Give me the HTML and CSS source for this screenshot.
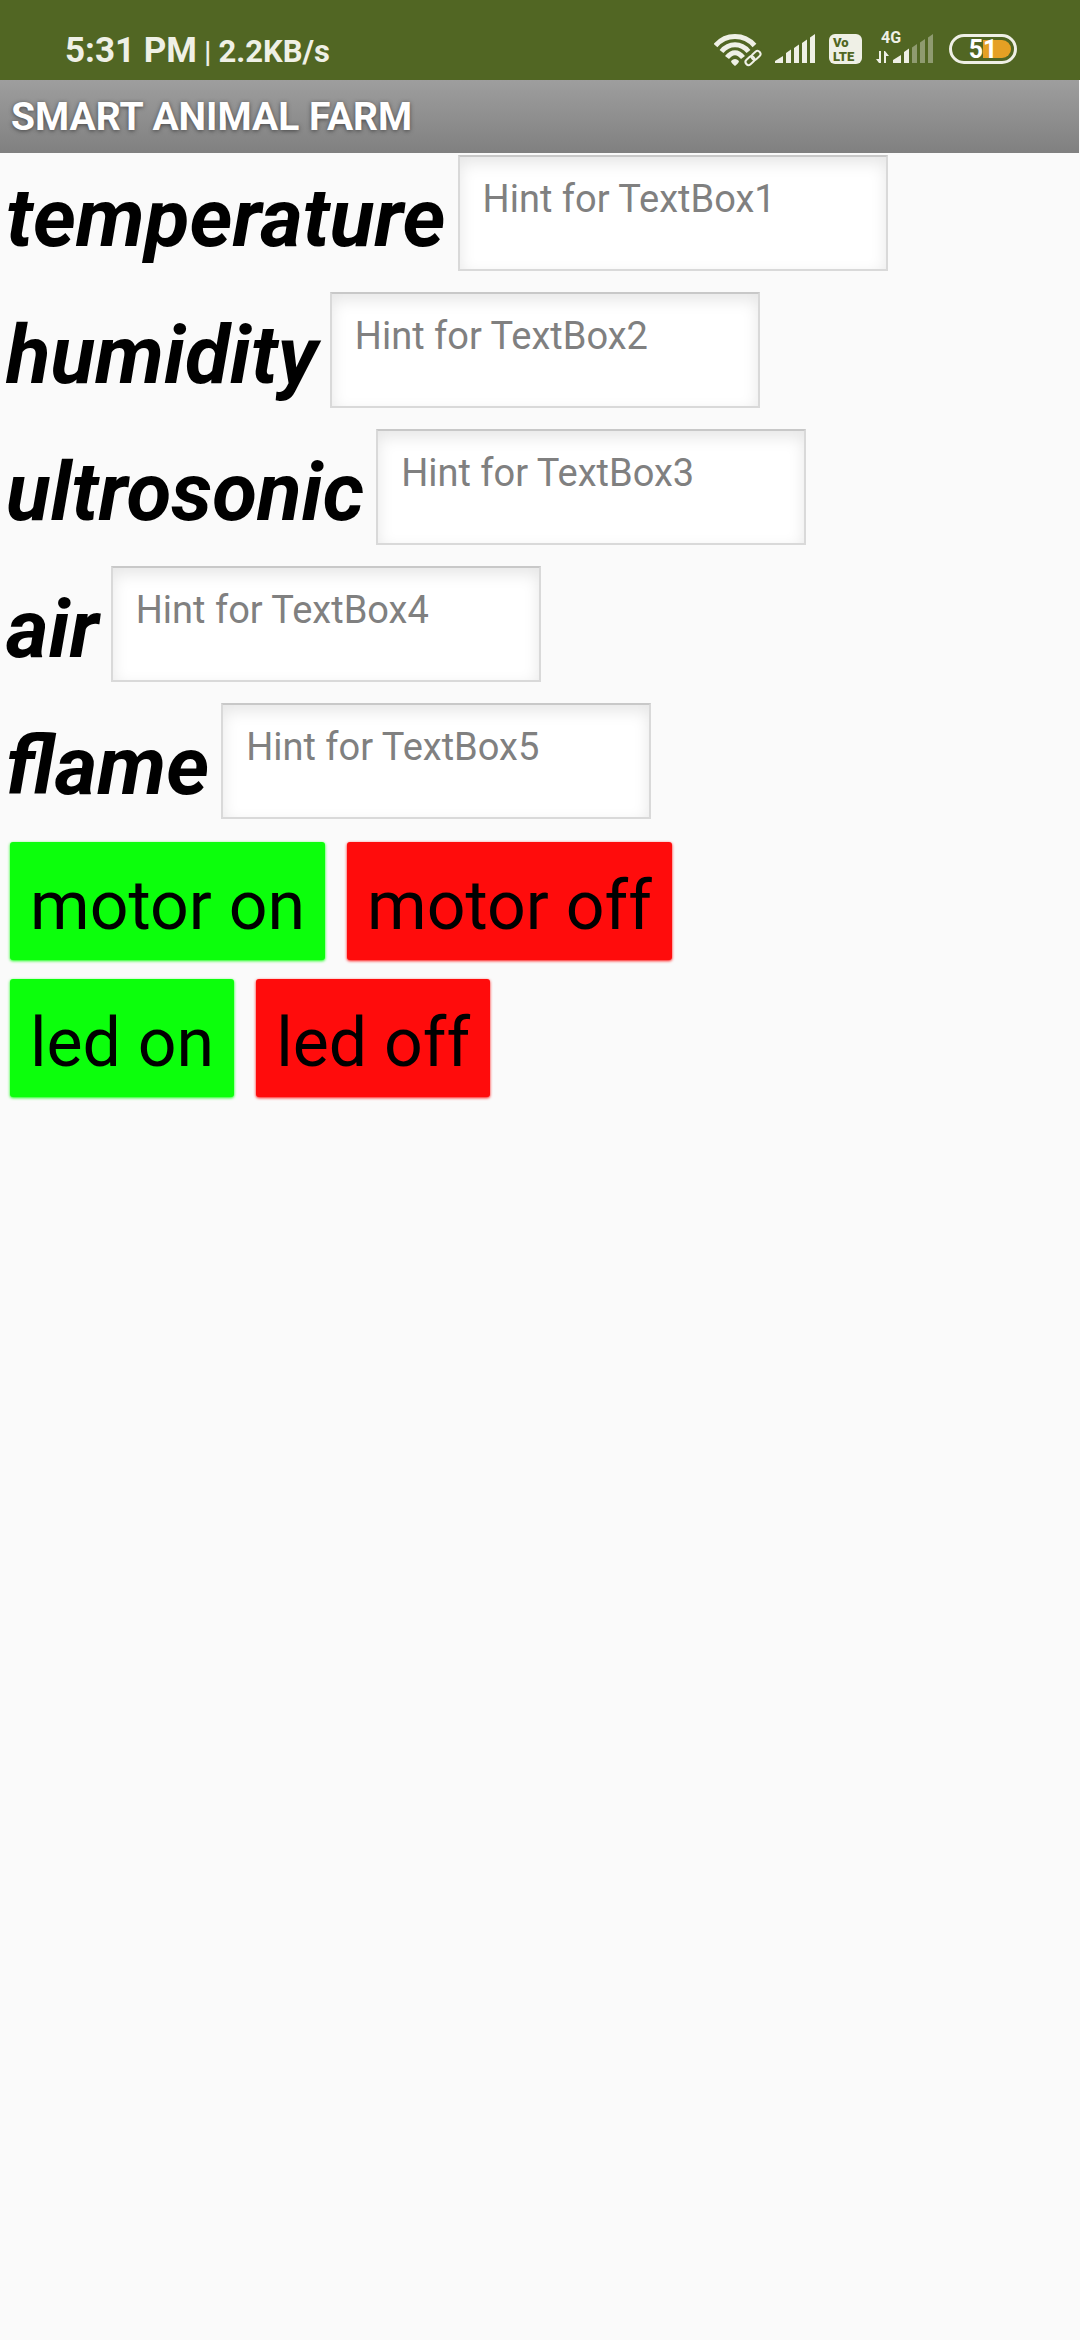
FILE: index.html
```html
<!DOCTYPE html>
<html lang="en">
<head>
<meta charset="utf-8">
<meta name="viewport" content="width=device-width, initial-scale=1">
<title>SMART ANIMAL FARM</title>
<link rel="stylesheet" href="styles.css">
</head>
<body>
<header class="status">
  <div class="status-left">
    <span class="clock">5:31 PM</span><span class="divider">|</span><span class="speed">2.2KB/s</span>
  </div>
  <div class="status-right">
    <svg class="wifi" width="48" height="34" viewBox="0 0 48 34" aria-label="Wi-Fi">
      <g fill="none" stroke="#eff0e6" stroke-width="5">
        <path d="M1.500 11.500C12-.5 30-.5 40.500 11.500"/>
        <path d="M7.500 17.500C15 8.500 27 8.500 34.500 17.500"/>
        <path d="M13 23.500C18 17 24 17 29 23.500"/>
      </g>
      <path d="M17 27q4-4 8 0c0 2-2 3-4 5c-2-2-4-3-4-5z" fill="#eff0e6"/>
      <g fill="none" transform="rotate(-42 39 24)">
        <g stroke="#516623" stroke-width="6"><rect x="30" y="21" width="10" height="6" rx="3"/><rect x="38" y="21" width="10" height="6" rx="3"/></g>
        <g stroke="#eff0e6" stroke-width="2"><rect x="30" y="21" width="10" height="6" rx="3"/><rect x="38" y="21" width="10" height="6" rx="3"/></g>
      </g>
    </svg>
    <svg class="signal" width="41" height="30" viewBox="0 0 41 30" aria-label="Signal">
      <path fill="#eff0e6" d="M0 29v-2l8-5v7zM11 29V19l5-3.500V29zM19 29V14l5-3.500V29zM27 29V9l5-3.500V29zM35 29V3.500L40 0V29z"/>
    </svg>
    <span class="volte"><span>Vo</span><span>LTE</span></span>
    <div class="mobile">
      <span class="net">4G</span>
      <svg width="57" height="30" viewBox="0 0 57 30" aria-label="Mobile data">
        <path fill="#eff0e6" d="M3 17h2v12H3l-3-4h3zM8 17h1l4 5h-3v7H8zM17 29v-3l8-5v8zM28 29V18l5-3.500V29z"/>
        <path fill="#8f9b70" d="M36 29V13.500l5-3.500V29zM44 29V8.500L49 5V29zM52 29V3.500L57 0V29z"/>
      </svg>
    </div>
    <span class="battery">51</span>
  </div>
</header>
<h1 class="title">SMART ANIMAL FARM</h1>
<main>
  <div class="row"><label for="temperature">temperature</label><input id="temperature" type="text" placeholder="Hint for TextBox1"></div>
  <div class="row"><label for="humidity">humidity</label><input id="humidity" type="text" placeholder="Hint for TextBox2"></div>
  <div class="row"><label for="ultrosonic">ultrosonic</label><input id="ultrosonic" type="text" placeholder="Hint for TextBox3"></div>
  <div class="row"><label for="air">air</label><input id="air" type="text" placeholder="Hint for TextBox4"></div>
  <div class="row"><label for="flame">flame</label><input id="flame" type="text" placeholder="Hint for TextBox5"></div>
  <div class="row actions"><button class="on" type="button">motor on</button><button class="off" type="button">motor off</button></div>
  <div class="row actions"><button class="on" type="button">led on</button><button class="off" type="button">led off</button></div>
</main>
</body>
</html>
```
FILE: styles.css
```css
* {
  box-sizing: border-box;
}

body {
  margin: 0;
  min-height: 100vh;
  background: #fafafa;
  color: #000;
  font-family: Roboto, sans-serif;
}

.status {
  display: flex;
  justify-content: space-between;
  height: 80px;
  padding: 20px 63px 0 65px;
  background: #516623;
  color: #eff0e6;
}

.status-left {
  display: flex;
  align-items: baseline;
  font-weight: 700;
  line-height: 62px;
}

.clock {
  font-size: 35px;
}

.divider {
  margin: 0 7px;
  font-size: 30px;
  font-weight: 500;
}

.speed {
  font-size: 31px;
}

.status-right {
  display: flex;
  align-items: flex-start;
  padding-top: 14px;
}

.signal {
  margin-left: 13px;
}

.volte {
  display: flex;
  flex-direction: column;
  align-items: flex-start;
  gap: 1px;
  width: 33px;
  height: 30px;
  margin-left: 13px;
  padding: 2px 4px;
  border-radius: 6px;
  background: #eff0e6;
  color: #516623;
  font-size: 13px;
  font-weight: 900;
  line-height: 13px;
}

.mobile {
  position: relative;
  margin-left: 14px;
}

.mobile svg,
.signal,
.wifi {
  display: block;
}

.net {
  position: absolute;
  top: -4px;
  left: 5px;
  font-size: 16px;
  font-weight: 700;
  line-height: 16px;
}

.battery {
  width: 68px;
  height: 30px;
  margin-left: 16px;
  padding: 3px;
  border: 3px solid #eff0e6;
  border-radius: 15px;
  background: linear-gradient(90deg, transparent 28px, #e5a024 28px) content-box;
  color: #fff;
  font-size: 25px;
  font-weight: 700;
  line-height: 19px;
  text-align: center;
}

.title {
  margin: 0 1px 0 0;
  height: 73px;
  padding: 1px 0 0 11px;
  background: linear-gradient(#9e9e9e, #808080);
  color: #fff;
  font-size: 39px;
  font-weight: 700;
  line-height: 72px;
  text-shadow: 0 1px 4px #444;
}

.row {
  display: flex;
  align-items: flex-start;
  height: 137px;
  padding: 2px 6px;
}

label {
  margin-right: 12px;
  font-size: 82px;
  font-style: italic;
  font-weight: 700;
  line-height: 127px;
}

input {
  width: 430px;
  height: 116px;
  padding: 0 23px 28px;
  border: 2px solid #d9d9d9;
  border-top-color: #c8c8c8;
  border-radius: 0;
  background: #fff;
  box-shadow: inset 0 6px 16px #e6e6e6;
  color: #000;
  font: 400 38px/46px Roboto, sans-serif;
}

input::placeholder {
  color: #808080;
  opacity: 1;
}

.actions {
  gap: 22px;
  padding: 4px 10px;
}

button {
  height: 118px;
  padding: 10px 20px 0;
  border: 0;
  border-radius: 3px;
  color: #000;
  font: 400 68px/80px Roboto, sans-serif;
}

.on {
  background: #0cff0c;
  box-shadow: 0 1px 3px #0cff0c;
}

.off {
  background: #ff0c0c;
  box-shadow: 0 1px 3px #ff0c0c;
}
```
